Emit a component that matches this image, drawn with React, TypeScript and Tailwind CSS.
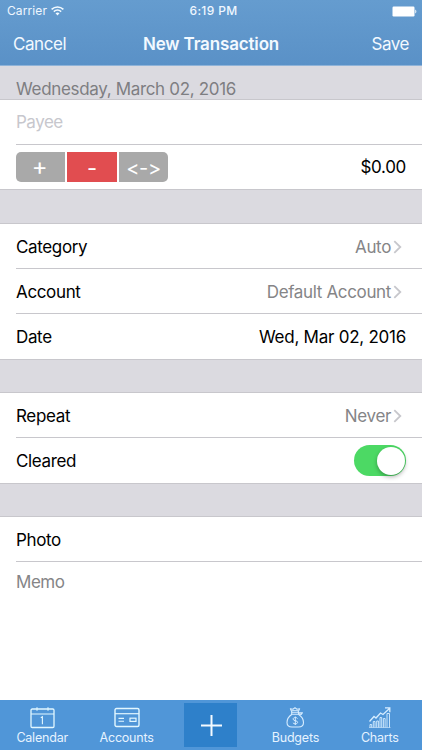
import React, { useState } from 'react';

const tabLabel = 'mt-px text-[12.5px] leading-4 tracking-[-0.2px] text-[#e6f3ff]';

function Chevron() {
  return (
    <svg width="9" height="14" viewBox="0 0 9 14" fill="none" stroke="#c7c7cc" strokeWidth="1.8">
      <path d="M1.3 1.2 7.3 7 1.3 12.8" />
    </svg>
  );
}

function StatusBar() {
  return (
    <div className="grid h-[22px] grid-cols-3 items-center pl-[7px] pr-1 text-xs leading-none text-[#eff7ff]">
      <div className="flex items-center gap-1">
        <span className="tracking-[0.1px]">Carrier</span>
        <svg width="13" height="10" viewBox="0 0 13 10" fill="none" stroke="#f2faff" strokeWidth="1.5">
          <path d="M.6 3.4C4 .1 9 .1 12.4 3.4" />
          <path d="M2.8 5.6c2.2-2 5.2-2 7.4 0" />
          <path d="M6.5 9.4 4.5 7.3c1.2-1 2.8-1 4 0Z" fill="#f2faff" stroke="none" />
        </svg>
      </div>
      <span className="pl-0.5 text-center font-medium tracking-[0.35px]">6:19 PM</span>
      <svg className="justify-self-end" width="26" height="11" viewBox="0 0 26 11" fill="#fff">
        <rect x="0.5" y="0.5" width="22" height="10" rx="1.2" />
        <path d="M23.3 3.5c1.4.6 1.4 3.4 0 4Z" />
      </svg>
    </div>
  );
}

function Header() {
  return (
    <header className="h-[66px] border-b border-[#8fb3d8] bg-linear-to-b from-[#659ccf] to-[#5a91c7]">
      <StatusBar />
      <div className="grid h-[43px] grid-cols-[1fr_auto_1fr] items-center px-[13px] text-[17px] text-[#f2f9ff]">
        <button className="justify-self-start tracking-[-0.45px]">Cancel</button>
        <h1 className="font-semibold tracking-[-0.15px]">New Transaction</h1>
        <button className="justify-self-end tracking-[-0.45px]">Save</button>
      </div>
    </header>
  );
}

type RowProps = {
  label: string;
  value?: string;
  chevron?: boolean;
  last?: boolean;
  children?: React.ReactNode;
};

function Row({ label, value, chevron, last, children }: RowProps) {
  return (
    <div className={`ml-4 flex h-[45px] items-center justify-between pr-4 ${last ? '' : 'border-b border-[#c8c7cc] pt-0.5'}`}>
      <span>{label}</span>
      {value && (
        <span className={chevron ? 'mr-1 flex items-center gap-[2px] text-[#858587]' : 'tracking-[-0.25px]'}>
          {value}
          {chevron && <Chevron />}
        </span>
      )}
      {children}
    </div>
  );
}

function TabBar() {
  return (
    <nav className="grid h-[50px] grid-cols-5 bg-[#5096d8]">
      <div className="flex flex-col items-center pt-[7px]">
        <svg width="25" height="22" viewBox="0 0 25 22" fill="none" stroke="#e2f7ff" strokeWidth="1.3">
          <rect x="1" y="2" width="23" height="18.5" rx="1.2" />
          <path d="M1 7h23M7 .3v3.5M18 .3v3.5M10.8 10.8l1.6-1.1v7.5" strokeWidth="1.1" />
        </svg>
        <span className={tabLabel}>Calendar</span>
      </div>
      <div className="flex flex-col items-center pt-[7px]">
        <svg width="26" height="22" viewBox="0 0 26 22" fill="none" stroke="#e2f7ff" strokeWidth="1.4">
          <rect x="1" y="1.5" width="24" height="18" rx="1.5" />
          <path d="M1 6.7h24" strokeWidth="1.2" />
          <path d="M4.5 11.4h5.5M4.5 14.2h5.5" strokeWidth="1.1" />
          <rect x="16" y="11.2" width="6" height="3.2" strokeWidth="1.2" />
        </svg>
        <span className={tabLabel}>Accounts</span>
      </div>
      <button className="mt-[3px] flex h-11 w-[53px] items-center justify-center justify-self-center bg-[#2e80ca] pl-0.5">
        <svg width="21" height="21" viewBox="0 0 21 21" stroke="#f3faff" strokeWidth="2">
          <path d="M10.5 0v21M0 10.5h21" />
        </svg>
      </button>
      <div className="flex flex-col items-center pt-[7px]">
        <svg width="19" height="22" viewBox="0 0 19 22" fill="none" stroke="#d7edff" strokeWidth="1.1" strokeLinejoin="round">
          <path d="M6 5.2 4.4 1.7l2.5.6L9 .8l2 1.4 2.6-.5L12 5.2" />
          <path d="M5.8 3.5h6.4" strokeWidth=".8" />
          <path d="M5.7 5.2h6.8v2H5.7ZM12.5 5.5l4 .2-1.3 1.7-2.7-.5" />
          <path d="M6 7.2C3.3 9 1 12 1 15.4c0 3.2 1.8 4.6 5 4.6h6.5c3.2 0 5-1.4 5-4.6C17.5 12 15 9 12.4 7.2" />
          <path d="M11.5 11.5c-.4-.7-1.2-1-2.2-1-1.3 0-2.2.6-2.2 1.6 0 2.2 4.5 1 4.5 3.2 0 1-.9 1.6-2.3 1.6-1.1 0-2-.4-2.4-1.2M9.3 9.5v8.5" strokeWidth="1" />
        </svg>
        <span className={tabLabel}>Budgets</span>
      </div>
      <div className="flex flex-col items-center pt-[7px]">
        <svg width="22" height="22" viewBox="0 0 22 22" fill="none" stroke="#d7edff">
          <path d="M.5 14.5 5 9.5l2 1.5 4.5-5 2.5 1.5 6.5-6M16 .8h4.8v4.5" strokeWidth="1.3" />
          <path d="M1 20.5v-3h1.7v3M4.3 20.5v-6H6v6M7.7 20.5V14h1.7v6.5M11 20.5v-10h1.7v10M14.4 20.5v-9h1.7v9M18 20.5v-14h2.5v14" strokeWidth=".9" />
          <path d="M0 20.5h21.5" strokeWidth=".6" />
        </svg>
        <span className={tabLabel}>Charts</span>
      </div>
    </nav>
  );
}

export default function App() {
  const [cleared, setCleared] = useState(true);

  return (
    <div className="flex h-[750px] w-[422px] flex-col overflow-hidden bg-white font-['Inter',sans-serif] text-[17px] leading-6 tracking-[-0.35px] text-black">
      <Header />

      <div className="flex h-[34px] items-end border-b border-[#c8c7cc] bg-[#dbdae0] pl-4 text-[#7e7e82]">
        <span className="-mb-0.5 tracking-[-0.33px]">Wednesday, March 02, 2016</span>
      </div>

      <section className="border-b border-[#c8c7cc]">
        <input
          className="ml-4 block h-[45px] w-[406px] border-b border-[#c8c7cc] tracking-[-0.5px] outline-none placeholder:text-[#c7c7cd]"
          placeholder="Payee"
        />
        <div className="flex h-11 items-center justify-between px-4">
          <div className="flex gap-0.5 overflow-hidden rounded-[5px] text-[22px] leading-[30px] text-white">
            <button className="h-[30px] w-[49px] bg-[#a9a9a9] pr-0.5 text-2xl leading-[30px]">+</button>
            <button className="h-[30px] w-[50px] bg-[#e14d50] pt-px">-</button>
            <button className="h-[30px] w-[49px] bg-[#a9a9a9] pt-px text-xl">&lt;-&gt;</button>
          </div>
          <span className="tracking-[-0.3px]">$0.00</span>
        </div>
      </section>

      <div className="h-[34px] border-b border-[#c8c7cc] bg-[#dbdae0]" />

      <section className="border-b border-[#c8c7cc]">
        <Row label="Category" value="Auto" chevron />
        <Row label="Account" value="Default Account" chevron />
        <Row label="Date" value="Wed, Mar 02, 2016" last />
      </section>

      <div className="h-[33px] border-b border-[#c8c7cc] bg-[#dbdae0]" />

      <section className="border-b border-[#c8c7cc]">
        <Row label="Repeat" value="Never" chevron />
        <Row label="Cleared" last>
          <button
            role="switch"
            aria-checked={cleared}
            onClick={() => setCleared(!cleared)}
            className={`flex h-[31px] w-[52px] items-center rounded-full p-[1.5px] ${cleared ? 'justify-end bg-[#4cd964]' : 'justify-start bg-[#e5e5ea]'}`}
          >
            <span className="size-7 rounded-full bg-white shadow-[0_2px_4px_rgba(0,0,0,0.3)]" />
          </button>
        </Row>
      </section>

      <div className="h-[33px] border-b border-[#c8c7cc] bg-[#dbdae0]" />

      <section className="flex-1">
        <Row label="Photo" />
        <p className="ml-4 pt-2 tracking-[-0.45px] text-[#858587]">Memo</p>
      </section>

      <TabBar />
    </div>
  );
}
